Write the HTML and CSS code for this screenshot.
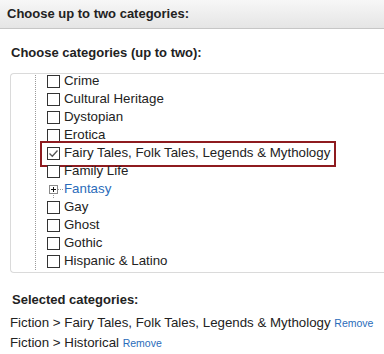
FILE: index.html
```html
<!DOCTYPE html>
<html>
<head>
<meta charset="utf-8">
<link rel="stylesheet" href="styles.css">
</head>
<body>
<div class="header">Choose up to two categories:</div>
<div class="content">
  <h2 class="label">Choose categories (up to two):</h2>
  <div class="tree-box">
    <ul class="tree">
      <li class="node"><span class="cb"></span><span class="name">Crime</span></li>
      <li class="node"><span class="cb"></span><span class="name">Cultural Heritage</span></li>
      <li class="node"><span class="cb"></span><span class="name">Dystopian</span></li>
      <li class="node"><span class="cb"></span><span class="name">Erotica</span></li>
      <li class="node highlighted"><span class="cb checked"><svg viewBox="0 0 11 11" width="11" height="11"><polyline points="1.5,5.5 4.3,8.3 9.5,2.5" fill="none" stroke="#555" stroke-width="1.3"/></svg></span><span class="name">Fairy Tales, Folk Tales, Legends &amp; Mythology</span><span class="mark"></span></li>
      <li class="node"><span class="cb"></span><span class="name">Family Life</span></li>
      <li class="node expandable"><span class="expander"><svg viewBox="0 0 9 9" width="9" height="9"><rect x="0.5" y="0.5" width="8" height="8" fill="#fff" stroke="#8a8a8a"/><path d="M2 4.5h5M4.5 2v5" stroke="#111" stroke-width="1"/></svg></span><span class="name link">Fantasy</span></li>
      <li class="node"><span class="cb"></span><span class="name">Gay</span></li>
      <li class="node"><span class="cb"></span><span class="name">Ghost</span></li>
      <li class="node"><span class="cb"></span><span class="name">Gothic</span></li>
      <li class="node"><span class="cb"></span><span class="name">Hispanic &amp; Latino</span></li>
    </ul>
  </div>
  <h3 class="label selected-title">Selected categories:</h3>
  <div class="selected">
    <div class="sel-line">Fiction &gt; Fairy Tales, Folk Tales, Legends &amp; Mythology <a class="remove" href="#">Remove</a></div>
    <div class="sel-line">Fiction &gt; Historical <a class="remove" href="#">Remove</a></div>
  </div>
</div>
</body>
</html>
```

FILE: styles.css
```css
html, body {
  margin: 0;
  padding: 0;
  overflow: hidden;
  background: #fff;
}
body {
  font-family: "Liberation Sans", Arial, sans-serif;
  font-size: 13.3px;
  color: #222;
  width: 384px;
}
.header {
  height: 28px;
  line-height: 28px;
  padding-left: 7px;
  font-size: 13px;
  font-weight: bold;
  color: #222;
  background: linear-gradient(#f7f7f7, #e5e5e5);
  border-bottom: 1px solid #c6c6c6;
}
.content {
  display: flex;
  flex-direction: column;
  padding: 0 0 0 10px;
}
.label {
  margin: 16px 0 0 1px;
  font-size: 13px;
  line-height: 16px;
  font-weight: bold;
  color: #222;
}
.tree-box {
  margin-top: 12px;
  width: 373px;
  height: 198px;
  border: 1px solid #dadada;
  border-right: none;
  border-radius: 4px 0 0 4px;
  overflow: hidden;
}
.tree {
  list-style: none;
  margin: -2px 0 0 24px;
  padding: 0 0 0 11px;
  border-left: 1px dotted #9a9a9a;
}
.node {
  position: relative;
  display: flex;
  align-items: center;
  height: 18px;
  gap: 4px;
  white-space: nowrap;
}
.cb {
  box-sizing: border-box;
  width: 13px;
  height: 13px;
  border: 1px solid #333;
  background: #fff;
  display: flex;
  align-items: center;
  justify-content: center;
  flex: none;
}
.cb svg { display: block; }
.name { line-height: 18px; }
.link { color: #2a6cba; }
.mark {
  position: absolute;
  left: -7px;
  top: -3px;
  width: 296px;
  height: 26px;
  box-sizing: border-box;
  border: 2px solid #8e1b1f;
  pointer-events: none;
}
.expander {
  position: relative;
  width: 13px;
  height: 18px;
  flex: none;
  display: flex;
  align-items: center;
  justify-content: center;
}
.expander svg {
  display: block;
  position: relative;
  z-index: 1;
}
.expander::after {
  content: "";
  position: absolute;
  left: 11px;
  width: 5px;
  top: 9px;
  border-top: 1px dotted #9a9a9a;
}
.expander::before {
  content: "";
  position: absolute;
  left: 6px;
  top: 13px;
  bottom: 0;
  border-left: 1px dotted #9a9a9a;
}
.selected-title {
  margin-top: 19px;
  margin-left: 2px;
}
.selected {
  margin-top: 5px;
}
.sel-line {
  line-height: 19px;
  white-space: nowrap;
}
.remove {
  color: #2a6cba;
  font-size: 10.5px;
  text-decoration: none;
}
```
